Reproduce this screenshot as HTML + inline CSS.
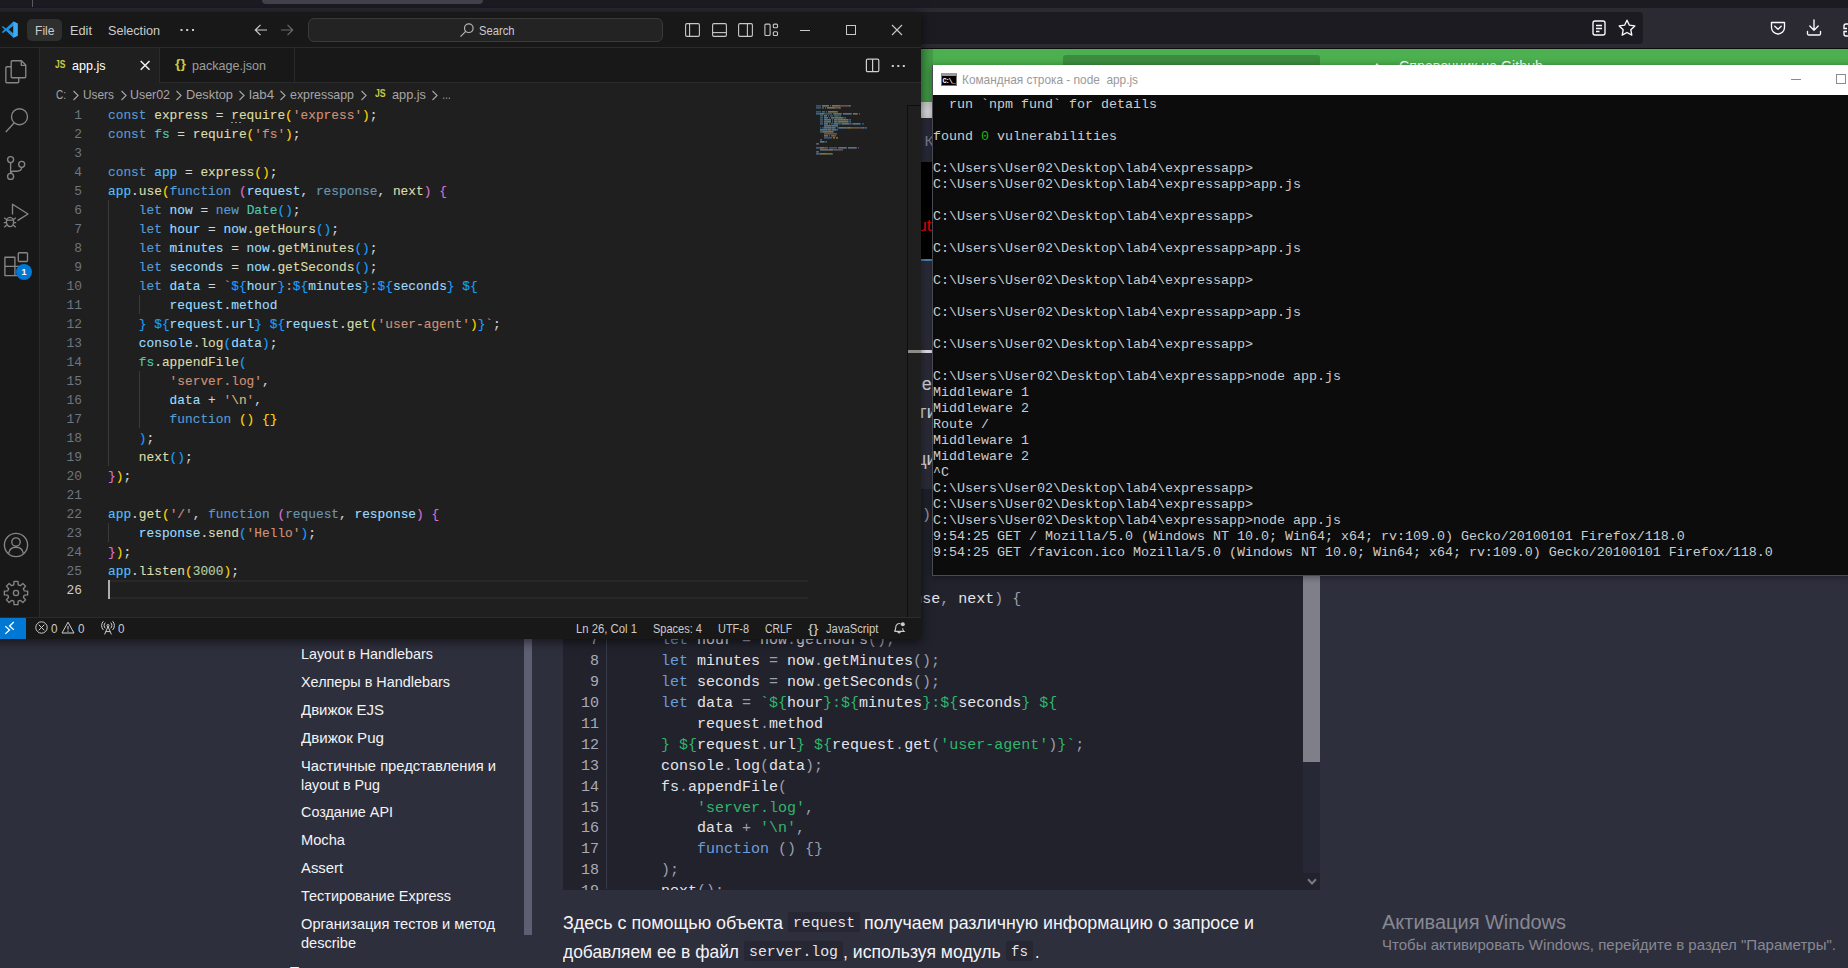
<!DOCTYPE html><html><head><meta charset="utf-8"><title>screen</title><style>
html,body{margin:0;padding:0;overflow:hidden}
body{width:1848px;height:968px;overflow:hidden;position:relative;background:#2e2f3d;font-family:'Liberation Sans', sans-serif}
div,span,svg{position:absolute;box-sizing:border-box}
.t{white-space:pre;display:block;transform-origin:0 50%}
i{font-style:normal}
/* vscode */
.vl{left:108px;height:19px;font:12.83px/19px 'Liberation Mono', monospace;color:#d4d4d4;white-space:pre;-webkit-text-stroke:.12px}
.ln{left:40px;width:42px;text-align:right;height:19px;font:12.83px/19px 'Liberation Mono', monospace;color:#6e7681}
.k{color:#569cd6}.f{color:#dcdcaa}.s{color:#ce9178}.v{color:#9cdcfe}.vd{color:#9cdcfe;opacity:.62}
.c{color:#4fc1ff}.ty{color:#4ec9b0}.n{color:#b5cea8}.e{color:#d7ba7d}
.b1{color:#ffd700}.b2{color:#da70d6}.b3{color:#179fff}.p{color:#d4d4d4}
/* terminal */
.tl{left:0;height:16px;font:13.33px/16px 'Liberation Mono', monospace;color:#cccccc;white-space:pre}
.g{color:#16b916}
/* browser code */
.bl{left:62px;height:20.9px;font:15.0px/20.9px 'Liberation Mono', monospace;white-space:pre;color:#e4e4ea}
.bn{left:0;width:36px;text-align:right;height:20.9px;font:15.0px/20.9px 'Liberation Mono', monospace;color:#a9aab8}
.bl .k{color:#6c9ddb}.bl .w{color:#e4e4ea}.bl .p{color:#9d9eab}.bl .s{color:#2fb56c}
</style></head><body><div style="left:0;top:0;width:1848px;height:8px;background:#1c1b22"></div><div style="left:262px;top:0;width:221px;height:4px;background:#42414d;border-radius:0 0 4px 4px"></div><div style="left:32px;top:0;width:1px;height:7px;background:#5b5b66"></div><div style="left:0;top:8px;width:1848px;height:40px;background:#2b2a33"></div><div style="left:600px;top:12px;width:1043px;height:32px;background:#1c1b22;border-radius:4px"></div><div style="left:0;top:48px;width:1848px;height:1px;background:#0c0c0d"></div><div style="left:0;top:49px;width:1848px;height:53px;background:#4caf50"></div><div style="left:1063px;top:55px;width:257px;height:40px;background:#3c8c40;border-radius:3px"></div><span id="gh" class="t" style="left:1399px;top:54.8px;font:400 15px/21px 'Liberation Sans', sans-serif;color:#ffffff;transform:scaleX(0.9495);">Справочник на Github</span><svg style="left:1371px;top:63px" width="12" height="12" viewBox="0 0 12 12"><path d="M6 0 L11 6 H8 V12 H4 V6 H1 Z" fill="#fff"/></svg><svg style="left:1591px;top:19px" width="16" height="18" viewBox="0 0 16 18" fill="none" stroke="#fbfbfe" stroke-width="1.35"><rect x="2" y="2" width="12" height="14" rx="2"/><path d="M5 6.5h6M5 9.5h6M5 12.5h3.5" stroke-width="1.4"/></svg><svg style="left:1617px;top:18px" width="20" height="20" viewBox="0 0 20 20" fill="none" stroke="#fbfbfe" stroke-width="1.35" stroke-linejoin="round"><path d="M10 2.2l2.4 5 5.4.7-4 3.8 1 5.4L10 14.5l-4.8 2.6 1-5.4-4-3.8 5.4-.7z"/></svg><svg style="left:1769px;top:19px" width="18" height="18" viewBox="0 0 18 18" fill="none" stroke="#fbfbfe" stroke-width="1.35" stroke-linecap="round" stroke-linejoin="round"><path d="M2.5 3.5h13v5a6.5 6.5 0 0 1-13 0z"/><path d="M5.8 7.2L9 10.2l3.2-3"/></svg><svg style="left:1805px;top:18px" width="18" height="20" viewBox="0 0 18 20" fill="none" stroke="#fbfbfe" stroke-width="1.35" stroke-linecap="round" stroke-linejoin="round"><path d="M9 2v10M4.8 8L9 12.2 13.2 8"/><path d="M2.5 13.5v2.2a1.3 1.3 0 0 0 1.3 1.3h10.4a1.3 1.3 0 0 0 1.3-1.3v-2.2"/></svg><svg style="left:1842px;top:22px" width="8" height="16" viewBox="0 0 8 16" fill="none" stroke="#fbfbfe" stroke-width="1.35"><path d="M8 2H4a2 2 0 0 0-2 2v2.5h3M8 14H4a2 2 0 0 1-2-2V9.5h3"/></svg><div style="left:921px;top:102px;width:12px;height:16px;background:linear-gradient(#d0d0d0,#e6e6e6 60%,#dadada)"></div><div style="left:921px;top:49px;width:12px;height:53px;background:#439d47"></div><div style="left:921px;top:118px;width:12px;height:44px;background:#2b2c3a"></div><span class="t" style="left:924.5px;top:129.9px;font:15.5px/22px 'Liberation Sans', sans-serif;color:#8384a0">К</span><div style="left:921px;top:162px;width:12px;height:97px;background:#000"></div><span class="t" style="left:917.2px;top:214px;font:17px/24px 'Liberation Sans', sans-serif;color:#ff0000">ut</span><div style="left:921px;top:259px;width:12px;height:2px;background:#4a8bc8"></div><div style="left:921px;top:350px;width:12px;height:3px;background:#f2f2f2"></div><span class="t" style="left:921.7px;top:371.4px;font:18px/26px 'Liberation Sans', sans-serif;color:#e4e4ea">е</span><span class="t" style="left:920.1px;top:399.4px;font:18px/26px 'Liberation Sans', sans-serif;color:#e4e4ea">ги</span><span class="t" style="left:916.3px;top:445.9px;font:18px/26px 'Liberation Sans', sans-serif;color:#e4e4ea">ци</span><span id="m1" class="t" style="left:301px;top:644.0px;font:400 14.6px/20px 'Liberation Sans', sans-serif;color:#f3f3f6;transform:scaleX(0.9827);">Layout в Handlebars</span><span id="m2" class="t" style="left:301px;top:672.0px;font:400 14.6px/20px 'Liberation Sans', sans-serif;color:#f3f3f6;transform:scaleX(0.9867);">Хелперы в Handlebars</span><span id="m3" class="t" style="left:301px;top:700.0px;font:400 14.6px/20px 'Liberation Sans', sans-serif;color:#f3f3f6;transform:scaleX(1.0263);">Движок EJS</span><span id="m4" class="t" style="left:301px;top:728.0px;font:400 14.6px/20px 'Liberation Sans', sans-serif;color:#f3f3f6;transform:scaleX(1.0365);">Движок Pug</span><span id="m5" class="t" style="left:301px;top:756.0px;font:400 14.6px/20px 'Liberation Sans', sans-serif;color:#f3f3f6;transform:scaleX(1.0107);">Частичные представления и</span><span id="m6" class="t" style="left:301px;top:775.0px;font:400 14.6px/20px 'Liberation Sans', sans-serif;color:#f3f3f6;transform:scaleX(0.9779);">layout в Pug</span><span id="m7" class="t" style="left:301px;top:802.0px;font:400 14.6px/20px 'Liberation Sans', sans-serif;color:#f3f3f6;transform:scaleX(0.9849);">Создание API</span><span id="m8" class="t" style="left:301px;top:830.0px;font:400 14.6px/20px 'Liberation Sans', sans-serif;color:#f3f3f6;transform:scaleX(1.0043);">Mocha</span><span id="m9" class="t" style="left:301px;top:858.0px;font:400 14.6px/20px 'Liberation Sans', sans-serif;color:#f3f3f6;transform:scaleX(1.0155);">Assert</span><span id="m10" class="t" style="left:301px;top:886.0px;font:400 14.6px/20px 'Liberation Sans', sans-serif;color:#f3f3f6;transform:scaleX(0.9908);">Тестирование Express</span><span id="m11" class="t" style="left:301px;top:914.0px;font:400 14.6px/20px 'Liberation Sans', sans-serif;color:#f3f3f6;transform:scaleX(1.0044);">Организация тестов и метод</span><span id="m12" class="t" style="left:301px;top:933.0px;font:400 14.6px/20px 'Liberation Sans', sans-serif;color:#f3f3f6;transform:scaleX(0.9969);">describe</span><span id="m13" class="t" style="left:289px;top:961.5px;font:400 14.6px/20px 'Liberation Sans', sans-serif;color:#f3f3f6;transform:scaleX(1.0509);">Пользовательские</span><div style="left:524px;top:600px;width:8px;height:335px;background:#5e5f73"></div><div style="left:563px;top:489px;width:757px;height:401px;background:#21222c;overflow:hidden"><div style="left:43px;top:0;width:1px;height:400px;background:#3a3b49"></div><div class="bn" style="top:16.9px">1</div><div class="bl" style="top:16.9px"><i class="k">const</i><i class="w"> express </i><i class="p">= </i><i class="w">require</i><i class="p">(</i><i class="s">&#x27;express&#x27;</i><i class="p">);</i></div><div class="bn" style="top:37.8px">2</div><div class="bl" style="top:37.8px"><i class="k">const</i><i class="w"> fs </i><i class="p">= </i><i class="w">require</i><i class="p">(</i><i class="s">&#x27;fs&#x27;</i><i class="p">);</i></div><div class="bn" style="top:58.7px">3</div><div class="bl" style="top:58.7px"></div><div class="bn" style="top:79.6px">4</div><div class="bl" style="top:79.6px"><i class="k">const</i><i class="w"> app </i><i class="p">= </i><i class="w">express</i><i class="p">();</i></div><div class="bn" style="top:100.5px">5</div><div class="bl" style="top:100.5px"><i class="w">app</i><i class="p">.</i><i class="w">use</i><i class="p">(</i><i class="k">function</i><i class="p"> (</i><i class="w">request</i><i class="p">, </i><i class="w">response</i><i class="p">, </i><i class="w">next</i><i class="p">) {</i></div><div class="bn" style="top:121.4px">6</div><div class="bl" style="top:121.4px"><i class="w">    </i><i class="k">let</i><i class="w"> now </i><i class="p">= </i><i class="k">new</i><i class="w"> Date</i><i class="p">();</i></div><div class="bn" style="top:142.3px">7</div><div class="bl" style="top:142.3px"><i class="w">    </i><i class="k">let</i><i class="w"> hour </i><i class="p">= </i><i class="w">now</i><i class="p">.</i><i class="w">getHours</i><i class="p">();</i></div><div class="bn" style="top:163.2px">8</div><div class="bl" style="top:163.2px"><i class="w">    </i><i class="k">let</i><i class="w"> minutes </i><i class="p">= </i><i class="w">now</i><i class="p">.</i><i class="w">getMinutes</i><i class="p">();</i></div><div class="bn" style="top:184.1px">9</div><div class="bl" style="top:184.1px"><i class="w">    </i><i class="k">let</i><i class="w"> seconds </i><i class="p">= </i><i class="w">now</i><i class="p">.</i><i class="w">getSeconds</i><i class="p">();</i></div><div class="bn" style="top:205.0px">10</div><div class="bl" style="top:205.0px"><i class="w">    </i><i class="k">let</i><i class="w"> data </i><i class="p">= </i><i class="s">`${</i><i class="w">hour</i><i class="s">}:${</i><i class="w">minutes</i><i class="s">}:${</i><i class="w">seconds</i><i class="s">} ${</i></div><div class="bn" style="top:225.9px">11</div><div class="bl" style="top:225.9px"><i class="w">        request</i><i class="p">.</i><i class="w">method</i></div><div class="bn" style="top:246.8px">12</div><div class="bl" style="top:246.8px"><i class="w">    </i><i class="s">} ${</i><i class="w">request</i><i class="p">.</i><i class="w">url</i><i class="s">} ${</i><i class="w">request</i><i class="p">.</i><i class="w">get</i><i class="p">(</i><i class="s">&#x27;user-agent&#x27;</i><i class="p">)</i><i class="s">}`</i><i class="p">;</i></div><div class="bn" style="top:267.7px">13</div><div class="bl" style="top:267.7px"><i class="w">    console</i><i class="p">.</i><i class="w">log</i><i class="p">(</i><i class="w">data</i><i class="p">);</i></div><div class="bn" style="top:288.6px">14</div><div class="bl" style="top:288.6px"><i class="w">    fs</i><i class="p">.</i><i class="w">appendFile</i><i class="p">(</i></div><div class="bn" style="top:309.5px">15</div><div class="bl" style="top:309.5px"><i class="w">        </i><i class="s">&#x27;server.log&#x27;</i><i class="p">,</i></div><div class="bn" style="top:330.4px">16</div><div class="bl" style="top:330.4px"><i class="w">        data </i><i class="p">+ </i><i class="s">&#x27;\n&#x27;</i><i class="p">,</i></div><div class="bn" style="top:351.3px">17</div><div class="bl" style="top:351.3px"><i class="w">        </i><i class="k">function</i><i class="p"> () {}</i></div><div class="bn" style="top:372.2px">18</div><div class="bl" style="top:372.2px"><i class="w">    </i><i class="p">);</i></div><div class="bn" style="top:393.1px">19</div><div class="bl" style="top:393.1px"><i class="w">    next</i><i class="p">();</i></div><div style="left:740px;top:0;width:17px;height:384px;background:#272836"></div><div style="left:740px;top:0;width:17px;height:273px;background:#7f7f8a"></div><svg style="left:743.5px;top:389px" width="10" height="8" viewBox="0 0 10 8" fill="none" stroke="#7b7b85" stroke-width="2"><path d="M1 1.300l4 4.200 4-4.200"/></svg></div><span id="p1" class="t" style="left:563px;top:910.0px;font:400 18.3px/26px 'Liberation Sans', sans-serif;color:#f4f4f7;transform:scaleX(0.9814);">Здесь с помощью объекта</span><div style="left:788px;top:912px;width:72px;height:20px;background:#262732;border-radius:3px"></div><span id="p2" class="t" style="left:793px;top:913.1px;font:400 15px/21px 'Liberation Mono', monospace;color:#e4e4ea;transform:scaleX(0.9839);">request</span><span id="p3" class="t" style="left:864px;top:910.0px;font:400 18.3px/26px 'Liberation Sans', sans-serif;color:#f4f4f7;transform:scaleX(0.9744);">получаем различную информацию о запросе и</span><span id="p4" class="t" style="left:563px;top:939.0px;font:400 18.3px/26px 'Liberation Sans', sans-serif;color:#f4f4f7;transform:scaleX(0.9512);">добавляем ее в файл</span><div style="left:744px;top:941px;width:99px;height:20px;background:#262732;border-radius:3px"></div><span id="p5" class="t" style="left:749px;top:942.1px;font:400 15px/21px 'Liberation Mono', monospace;color:#e4e4ea;transform:scaleX(0.9887);">server.log</span><span id="p6" class="t" style="left:843.4px;top:939.0px;font:400 18.3px/26px 'Liberation Sans', sans-serif;color:#f4f4f7;transform:scaleX(0.9646);">, используя модуль</span><div style="left:1006px;top:941px;width:27px;height:20px;background:#262732;border-radius:3px"></div><span id="p7" class="t" style="left:1011px;top:942.1px;font:400 15px/21px 'Liberation Mono', monospace;color:#e4e4ea;transform:scaleX(0.9436);">fs</span><span id="p8" class="t" style="left:1034.5px;top:939.0px;font:400 18.3px/26px 'Liberation Sans', sans-serif;color:#f4f4f7;transform:scaleX(0.8834);">.</span><span id="w1" class="t" style="left:1382px;top:908.0px;font:400 20px/28px 'Liberation Sans', sans-serif;color:#878892;transform:scaleX(0.9982);">Активация Windows</span><span id="w2" class="t" style="left:1382px;top:935.0px;font:400 14.5px/20px 'Liberation Sans', sans-serif;color:#878892;transform:scaleX(1.0364);">Чтобы активировать Windows, перейдите в раздел &quot;Параметры&quot;.</span><div style="left:932px;top:65px;width:920px;height:511px;background:#4a4a52;box-shadow:0 1px 7px rgba(0,0,0,.4)"></div><div style="left:933px;top:65px;width:920px;height:30px;background:#ffffff"></div><div style="left:933px;top:95px;width:920px;height:480px;background:#0c0c0c;overflow:hidden"><div class="tl" style="top:1.5px">  run `npm fund` for details</div><div class="tl" style="top:33.5px">found <i class="g">0</i> vulnerabilities</div><div class="tl" style="top:65.5px">C:\Users\User02\Desktop\lab4\expressapp&gt;</div><div class="tl" style="top:81.5px">C:\Users\User02\Desktop\lab4\expressapp&gt;app.js</div><div class="tl" style="top:113.5px">C:\Users\User02\Desktop\lab4\expressapp&gt;</div><div class="tl" style="top:145.5px">C:\Users\User02\Desktop\lab4\expressapp&gt;app.js</div><div class="tl" style="top:177.5px">C:\Users\User02\Desktop\lab4\expressapp&gt;</div><div class="tl" style="top:209.5px">C:\Users\User02\Desktop\lab4\expressapp&gt;app.js</div><div class="tl" style="top:241.5px">C:\Users\User02\Desktop\lab4\expressapp&gt;</div><div class="tl" style="top:273.5px">C:\Users\User02\Desktop\lab4\expressapp&gt;node app.js</div><div class="tl" style="top:289.5px">Middleware 1</div><div class="tl" style="top:305.5px">Middleware 2</div><div class="tl" style="top:321.5px">Route /</div><div class="tl" style="top:337.5px">Middleware 1</div><div class="tl" style="top:353.5px">Middleware 2</div><div class="tl" style="top:369.5px">^C</div><div class="tl" style="top:385.5px">C:\Users\User02\Desktop\lab4\expressapp&gt;</div><div class="tl" style="top:401.5px">C:\Users\User02\Desktop\lab4\expressapp&gt;</div><div class="tl" style="top:417.5px">C:\Users\User02\Desktop\lab4\expressapp&gt;node app.js</div><div class="tl" style="top:433.5px">9:54:25 GET / Mozilla/5.0 (Windows NT 10.0; Win64; x64; rv:109.0) Gecko/20100101 Firefox/118.0</div><div class="tl" style="top:449.5px">9:54:25 GET /favicon.ico Mozilla/5.0 (Windows NT 10.0; Win64; x64; rv:109.0) Gecko/20100101 Firefox/118.0</div></div><div style="left:941px;top:73px;width:16px;height:13px;background:#000;border:1px solid #7a7a7a;border-top:3px solid #9a9a9a"></div><span class="t" style="left:942.600px;top:76.500px;font:700 7px/9px 'Liberation Mono', monospace;color:#fff;letter-spacing:-1.200px">C:\_</span><span id="tt" class="t" style="left:962px;top:72.0px;font:400 12.2px/17px 'Liberation Sans', sans-serif;color:#999999;transform:scaleX(0.9712);">Командная строка - node  app.js</span><div style="left:1791px;top:79px;width:10px;height:1px;background:#8a8a8a"></div><div style="left:1836px;top:74px;width:10px;height:10px;border:1px solid #8a8a8a"></div><div style="left:-10px;top:12px;width:931px;height:627px;background:#181818;box-shadow:0 2px 10px 1px rgba(0,0,0,.55)"></div><div style="left:0;top:12px;width:921px;height:35px;background:#181818"></div><div style="left:0;top:47px;width:921px;height:1px;background:#2b2b2b"></div><svg style="left:.8px;top:21.300px" width="17.500" height="17.200" viewBox="0 0 100 100"><path d="M71 3 L28 43 L11 30 L3 34 L20 50 L3 66 L11 70 L28 57 L71 97 L96 86 V14 Z M72 28 V72 L43 50 Z" fill="#2391de" fill-rule="evenodd"/><path d="M71 3 L96 14 V86 L71 97 Z" fill="#3dacf7"/></svg><div style="left:27px;top:19px;width:35px;height:22px;background:#2e2f2f;border-radius:5px"></div><span id="mf" class="t" style="left:35px;top:22.0px;font:400 13px/18px 'Liberation Sans', sans-serif;color:#cccccc;transform:scaleX(0.9306);">File</span><span id="me" class="t" style="left:70px;top:22.0px;font:400 13px/18px 'Liberation Sans', sans-serif;color:#cccccc;transform:scaleX(0.9819);">Edit</span><span id="ms" class="t" style="left:108px;top:22.0px;font:400 13px/18px 'Liberation Sans', sans-serif;color:#cccccc;transform:scaleX(0.9722);">Selection</span><svg style="left:180px;top:28px" width="15" height="4" viewBox="0 0 15 4" fill="#cccccc"><rect x="0.5" y="1" width="2" height="2"/><rect x="6.2" y="1" width="2" height="2"/><rect x="12" y="1" width="2" height="2"/></svg><svg style="left:254px;top:23px" width="14" height="14" viewBox="0 0 14 14" fill="none" stroke="#cccccc" stroke-width="1.2"><path d="M13 7H1.5M6.5 1.8L1.3 7l5.2 5.2"/></svg><svg style="left:280px;top:23px" width="14" height="14" viewBox="0 0 14 14" fill="none" stroke="#6a6a6a" stroke-width="1.2"><path d="M1 7h11.5M7.5 1.8L12.7 7l-5.2 5.2"/></svg><div style="left:308px;top:18px;width:355px;height:24px;background:#232323;border:1px solid #3a3a3a;border-radius:6px"></div><svg style="left:459px;top:22px" width="16" height="16" viewBox="0 0 16 16" fill="none" stroke="#b4b4b4" stroke-width="1.2"><circle cx="9.8" cy="6.2" r="4.3"/><path d="M6.7 9.3L1.5 14.6"/></svg><span id="sr" class="t" style="left:479px;top:22.5px;font:400 12.4px/17px 'Liberation Sans', sans-serif;color:#cccccc;transform:scaleX(0.9041);">Search</span><svg style="left:684.5px;top:23px" width="15" height="14" viewBox="0 0 15 14" fill="none" stroke="#c8c8c8" stroke-width="1.1"><rect x=".6" y=".6" width="13.8" height="12.8" rx="1.3"/><path d="M4.6 .6v12.8"/></svg><svg style="left:711.5px;top:23px" width="15" height="14" viewBox="0 0 15 14" fill="none" stroke="#c8c8c8" stroke-width="1.1"><rect x=".6" y=".6" width="13.8" height="12.8" rx="1.3"/><path d="M.6 9.6h13.8"/></svg><svg style="left:737.5px;top:23px" width="15" height="14" viewBox="0 0 15 14" fill="none" stroke="#c8c8c8" stroke-width="1.1"><rect x=".6" y=".6" width="13.8" height="12.8" rx="1.3"/><path d="M9.4 .6v12.8"/></svg><svg style="left:763.5px;top:23px" width="15" height="14" viewBox="0 0 15 14" fill="none" stroke="#c8c8c8" stroke-width="1.1"><rect x=".9" y="1.1" width="5.2" height="11.4" rx="1"/><rect x="9.3" y="1.1" width="4.2" height="3.6" rx="1"/><rect x="9.3" y="8.7" width="4.2" height="3.8" rx="1"/></svg><div style="left:800px;top:30px;width:10px;height:1px;background:#c8c8c8"></div><div style="left:846px;top:25px;width:10px;height:10px;border:1px solid #c8c8c8"></div><svg style="left:891px;top:24px" width="12" height="12" viewBox="0 0 12 12" stroke="#c8c8c8" stroke-width="1.1"><path d="M1 1l10 10M11 1L1 11"/></svg><div style="left:0;top:48px;width:40px;height:569px;background:#181818;border-right:1px solid #2b2b2b"></div><svg style="left:4px;top:59px" width="25" height="26" viewBox="0 0 25 26" fill="none" stroke="#868686" stroke-width="1.35" stroke-linejoin="round"><path d="M8.200 1.750H17.500L21.750 6V17.700a1 1 0 0 1-1 1H8.200a1 1 0 0 1-1-1V2.750a1 1 0 0 1 1-1Z"/><path d="M17.300 1.900V6.300H21.600"/><path d="M7.200 7.750H2.850a1 1 0 0 0-1 1V22.750a1 1 0 0 0 1 1H13.750a1 1 0 0 0 1-1V18.700"/></svg><svg style="left:4px;top:107px" width="26" height="26" viewBox="0 0 26 26" fill="none" stroke="#868686" stroke-width="1.35" stroke-linejoin="round"><circle cx="15.5" cy="9.7" r="8"/><path d="M10.3 15.8L1.8 25"/></svg><svg style="left:4px;top:155px" width="25" height="27" viewBox="0 0 25 27" fill="none" stroke="#868686" stroke-width="1.35" stroke-linejoin="round"><circle cx="6.6" cy="4.6" r="3"/><circle cx="6.6" cy="21.4" r="3"/><circle cx="17.700" cy="9.300" r="3"/><path d="M6.600 7.600v10.800M17.700 12.300c0 3-1.800 3.900-5 3.900H9c-1.400 0-2.400.9-2.400 2.200"/></svg><svg style="left:2px;top:202px" width="28" height="27" viewBox="0 0 28 27" fill="none" stroke="#868686" stroke-width="1.35" stroke-linejoin="round"><path d="M10.5 12.5V2.2L26 12 15.5 18.6"/><ellipse cx="8" cy="20" rx="3.6" ry="4.6"/><path d="M4.600 18.200h6.800M2.200 15.800l2.600 2M13.800 15.800l-2.600 2M1.800 20.600h2.600M11.600 20.600h2.600M2.200 25.200l2.600-2.200M13.800 25.200l-2.600-2.200" stroke-width="1.2"/></svg><svg style="left:4px;top:251px" width="26" height="27" viewBox="0 0 26 27" fill="none" stroke="#868686" stroke-width="1.35" stroke-linejoin="round"><path d="M.900 6.200h10v9.200H.900zM.900 15.400h10v9.200H.900zM10.900 15.400h10v9.200H10.900z"/><rect x="14.300" y="1.700" width="9.200" height="8.800" rx=".9"/></svg><div style="left:16px;top:264px;width:16px;height:16px;border-radius:8px;background:#0078d4"></div><span class="t" style="left:21.5px;top:266px;font:700 9px/12px 'Liberation Sans', sans-serif;color:#fff">1</span><svg style="left:3px;top:532px" width="26" height="26" viewBox="0 0 26 26" fill="none" stroke="#868686" stroke-width="1.35" stroke-linejoin="round" stroke-width="1.4"><circle cx="13" cy="13" r="11.6"/><circle cx="13" cy="10" r="4.2"/><path d="M5.6 21.6c.6-4 3.6-6.4 7.4-6.4s6.8 2.400 7.400 6.400"/></svg><svg style="left:3px;top:580px" width="26" height="26" viewBox="0 0 26 26" fill="none" stroke="#868686" stroke-width="1.35" stroke-linejoin="round"><path d="M10.82 4.78 L11.06 1.36 L14.94 1.36 L15.18 4.78 L17.27 5.65 L19.86 3.40 L22.60 6.14 L20.35 8.73 L21.22 10.82 L24.64 11.06 L24.64 14.94 L21.22 15.18 L20.35 17.27 L22.60 19.86 L19.86 22.60 L17.27 20.35 L15.18 21.22 L14.94 24.64 L11.06 24.64 L10.82 21.22 L8.73 20.35 L6.14 22.60 L3.40 19.86 L5.65 17.27 L4.78 15.18 L1.36 14.94 L1.36 11.06 L4.78 10.82 L5.65 8.73 L3.40 6.14 L6.14 3.40 L8.73 5.65 Z"/><circle cx="13" cy="13" r="2.6"/></svg><div style="left:40px;top:48px;width:881px;height:35px;background:#181818;border-bottom:1px solid #2b2b2b"></div><div style="left:40px;top:48px;width:120px;height:35px;background:#1f1f1f;border-right:1px solid #2b2b2b"></div><div style="left:294px;top:48px;width:1px;height:34px;background:#2b2b2b"></div><span id="tj" class="t" style="left:54.8px;top:57.6px;font:700 10.2px/14px 'Liberation Sans', sans-serif;color:#cbcb41;transform:scaleX(0.8341);">JS</span><span id="ta" class="t" style="left:72px;top:56.5px;font:400 13px/18px 'Liberation Sans', sans-serif;color:#ffffff;transform:scaleX(0.9653);">app.js</span><svg style="left:139px;top:59px" width="12" height="12" viewBox="0 0 12 12" stroke="#f0f0f0" stroke-width="1.5"><path d="M1.700 2l8.800 8.800M10.500 2L1.700 10.800"/></svg><span id="tb" class="t" style="left:174.5px;top:54.1px;font:700 13.5px/19px 'Liberation Sans', sans-serif;color:#cbcb41;transform:scaleX(1.0461);">{}</span><span id="tp" class="t" style="left:192px;top:56.5px;font:400 13px/18px 'Liberation Sans', sans-serif;color:#9d9d9d;transform:scaleX(0.9657);">package.json</span><svg style="left:865px;top:58px" width="15" height="15" viewBox="0 0 15 15" fill="none" stroke="#d0d0d0" stroke-width="1.2"><rect x="1.4" y="1.200" width="12.400" height="12.400" rx="1.2"/><path d="M7.600 1.200v12.400"/></svg><svg style="left:891px;top:64px" width="15" height="4" viewBox="0 0 15 4" fill="#d0d0d0"><rect x=".8" y="1" width="2" height="2"/><rect x="6.300" y="1" width="2" height="2"/><rect x="11.800" y="1" width="2" height="2"/></svg><div style="left:40px;top:83px;width:881px;height:534px;background:#1f1f1f"></div><span id="c1" class="t" style="left:56px;top:86.0px;font:400 13px/18px 'Liberation Sans', sans-serif;color:#a6a6a6;transform:scaleX(0.7692);">C:</span><span id="c2" class="t" style="left:83px;top:86.0px;font:400 13px/18px 'Liberation Sans', sans-serif;color:#a6a6a6;transform:scaleX(0.9130);">Users</span><span id="c3" class="t" style="left:130px;top:86.0px;font:400 13px/18px 'Liberation Sans', sans-serif;color:#a6a6a6;transform:scaleX(0.9542);">User02</span><span id="c4" class="t" style="left:186px;top:86.0px;font:400 13px/18px 'Liberation Sans', sans-serif;color:#a6a6a6;transform:scaleX(0.9853);">Desktop</span><span id="c5" class="t" style="left:249px;top:86.0px;font:400 13px/18px 'Liberation Sans', sans-serif;color:#a6a6a6;transform:scaleX(1.0172);">lab4</span><span id="c6" class="t" style="left:290px;top:86.0px;font:400 13px/18px 'Liberation Sans', sans-serif;color:#a6a6a6;transform:scaleX(0.9521);">expressapp</span><span id="c8" class="t" style="left:392px;top:86.0px;font:400 13px/18px 'Liberation Sans', sans-serif;color:#a6a6a6;transform:scaleX(0.9797);">app.js</span><svg style="left:72px;top:89.5px" width="8" height="11" viewBox="0 0 8 11" fill="none" stroke="#a6a6a6" stroke-width="1.1"><path d="M1.5 1l4.600 4.500L1.500 10"/></svg><svg style="left:120px;top:89.5px" width="8" height="11" viewBox="0 0 8 11" fill="none" stroke="#a6a6a6" stroke-width="1.1"><path d="M1.5 1l4.600 4.500L1.500 10"/></svg><svg style="left:175px;top:89.5px" width="8" height="11" viewBox="0 0 8 11" fill="none" stroke="#a6a6a6" stroke-width="1.1"><path d="M1.5 1l4.600 4.500L1.500 10"/></svg><svg style="left:238px;top:89.5px" width="8" height="11" viewBox="0 0 8 11" fill="none" stroke="#a6a6a6" stroke-width="1.1"><path d="M1.5 1l4.600 4.500L1.500 10"/></svg><svg style="left:279px;top:89.5px" width="8" height="11" viewBox="0 0 8 11" fill="none" stroke="#a6a6a6" stroke-width="1.1"><path d="M1.5 1l4.600 4.500L1.500 10"/></svg><svg style="left:360px;top:89.5px" width="8" height="11" viewBox="0 0 8 11" fill="none" stroke="#a6a6a6" stroke-width="1.1"><path d="M1.5 1l4.600 4.500L1.500 10"/></svg><svg style="left:431px;top:89.5px" width="8" height="11" viewBox="0 0 8 11" fill="none" stroke="#a6a6a6" stroke-width="1.1"><path d="M1.5 1l4.600 4.500L1.500 10"/></svg><span id="c7" class="t" style="left:375.3px;top:86.8px;font:700 10.2px/14px 'Liberation Sans', sans-serif;color:#cbcb41;transform:scaleX(0.8581);">JS</span><span id="c9" class="t" style="left:442px;top:86.0px;font:400 13px/18px 'Liberation Sans', sans-serif;color:#a6a6a6;transform:scaleX(0.6923);">…</span><div class="ln" style="top:106px;color:#6e7681">1</div><div class="vl" style="top:106px"><i class="k">const</i> <i class="f">express</i><i class="p"> = </i><i class="f">require</i><i class="b1">(</i><i class="s">&#x27;express&#x27;</i><i class="b1">)</i><i class="p">;</i></div><div class="ln" style="top:125px;color:#6e7681">2</div><div class="vl" style="top:125px"><i class="k">const</i> <i class="ty">fs</i><i class="p"> = </i><i class="f">require</i><i class="b1">(</i><i class="s">&#x27;fs&#x27;</i><i class="b1">)</i><i class="p">;</i></div><div class="ln" style="top:144px;color:#6e7681">3</div><div class="ln" style="top:163px;color:#6e7681">4</div><div class="vl" style="top:163px"><i class="k">const</i> <i class="c">app</i><i class="p"> = </i><i class="f">express</i><i class="b1">()</i><i class="p">;</i></div><div class="ln" style="top:182px;color:#6e7681">5</div><div class="vl" style="top:182px"><i class="c">app</i><i class="p">.</i><i class="f">use</i><i class="b1">(</i><i class="k">function</i><i class="p"> </i><i class="b2">(</i><i class="v">request</i><i class="p">, </i><i class="vd">response</i><i class="p">, </i><i class="f">next</i><i class="b2">)</i><i class="p"> </i><i class="b2">{</i></div><div class="ln" style="top:201px;color:#6e7681">6</div><div class="vl" style="top:201px">    <i class="k">let</i><i class="p"> </i><i class="v">now</i><i class="p"> = </i><i class="k">new</i><i class="p"> </i><i class="ty">Date</i><i class="b3">()</i><i class="p">;</i></div><div class="ln" style="top:220px;color:#6e7681">7</div><div class="vl" style="top:220px">    <i class="k">let</i><i class="p"> </i><i class="v">hour</i><i class="p"> = </i><i class="v">now</i><i class="p">.</i><i class="f">getHours</i><i class="b3">()</i><i class="p">;</i></div><div class="ln" style="top:239px;color:#6e7681">8</div><div class="vl" style="top:239px">    <i class="k">let</i><i class="p"> </i><i class="v">minutes</i><i class="p"> = </i><i class="v">now</i><i class="p">.</i><i class="f">getMinutes</i><i class="b3">()</i><i class="p">;</i></div><div class="ln" style="top:258px;color:#6e7681">9</div><div class="vl" style="top:258px">    <i class="k">let</i><i class="p"> </i><i class="v">seconds</i><i class="p"> = </i><i class="v">now</i><i class="p">.</i><i class="f">getSeconds</i><i class="b3">()</i><i class="p">;</i></div><div class="ln" style="top:277px;color:#6e7681">10</div><div class="vl" style="top:277px">    <i class="k">let</i><i class="p"> </i><i class="v">data</i><i class="p"> = </i><i class="s">`</i><i class="b3">${</i><i class="v">hour</i><i class="b3">}</i><i class="s">:</i><i class="b3">${</i><i class="v">minutes</i><i class="b3">}</i><i class="s">:</i><i class="b3">${</i><i class="v">seconds</i><i class="b3">}</i><i class="s"> </i><i class="b3">${</i></div><div class="ln" style="top:296px;color:#6e7681">11</div><div class="vl" style="top:296px">        <i class="v">request</i><i class="p">.</i><i class="v">method</i></div><div class="ln" style="top:315px;color:#6e7681">12</div><div class="vl" style="top:315px">    <i class="b3">}</i><i class="s"> </i><i class="b3">${</i><i class="v">request</i><i class="p">.</i><i class="v">url</i><i class="b3">}</i><i class="s"> </i><i class="b3">${</i><i class="v">request</i><i class="p">.</i><i class="f">get</i><i class="b1">(</i><i class="s">&#x27;user-agent&#x27;</i><i class="b1">)</i><i class="b3">}</i><i class="s">`</i><i class="p">;</i></div><div class="ln" style="top:334px;color:#6e7681">13</div><div class="vl" style="top:334px">    <i class="v">console</i><i class="p">.</i><i class="f">log</i><i class="b3">(</i><i class="v">data</i><i class="b3">)</i><i class="p">;</i></div><div class="ln" style="top:353px;color:#6e7681">14</div><div class="vl" style="top:353px">    <i class="ty">fs</i><i class="p">.</i><i class="f">appendFile</i><i class="b3">(</i></div><div class="ln" style="top:372px;color:#6e7681">15</div><div class="vl" style="top:372px">        <i class="s">&#x27;server.log&#x27;</i><i class="p">,</i></div><div class="ln" style="top:391px;color:#6e7681">16</div><div class="vl" style="top:391px">        <i class="v">data</i><i class="p"> + </i><i class="s">&#x27;</i><i class="e">\n</i><i class="s">&#x27;</i><i class="p">,</i></div><div class="ln" style="top:410px;color:#6e7681">17</div><div class="vl" style="top:410px">        <i class="k">function</i><i class="p"> </i><i class="b1">()</i><i class="p"> </i><i class="b1">{}</i></div><div class="ln" style="top:429px;color:#6e7681">18</div><div class="vl" style="top:429px">    <i class="b3">)</i><i class="p">;</i></div><div class="ln" style="top:448px;color:#6e7681">19</div><div class="vl" style="top:448px">    <i class="f">next</i><i class="b3">()</i><i class="p">;</i></div><div class="ln" style="top:467px;color:#6e7681">20</div><div class="vl" style="top:467px"><i class="b2">}</i><i class="b1">)</i><i class="p">;</i></div><div class="ln" style="top:486px;color:#6e7681">21</div><div class="ln" style="top:505px;color:#6e7681">22</div><div class="vl" style="top:505px"><i class="c">app</i><i class="p">.</i><i class="f">get</i><i class="b1">(</i><i class="s">&#x27;/&#x27;</i><i class="p">, </i><i class="k">function</i><i class="p"> </i><i class="b2">(</i><i class="vd">request</i><i class="p">, </i><i class="v">response</i><i class="b2">)</i><i class="p"> </i><i class="b2">{</i></div><div class="ln" style="top:524px;color:#6e7681">23</div><div class="vl" style="top:524px">    <i class="v">response</i><i class="p">.</i><i class="f">send</i><i class="b3">(</i><i class="s">&#x27;Hello&#x27;</i><i class="b3">)</i><i class="p">;</i></div><div class="ln" style="top:543px;color:#6e7681">24</div><div class="vl" style="top:543px"><i class="b2">}</i><i class="b1">)</i><i class="p">;</i></div><div class="ln" style="top:562px;color:#6e7681">25</div><div class="vl" style="top:562px"><i class="c">app</i><i class="p">.</i><i class="f">listen</i><i class="b1">(</i><i class="n">3000</i><i class="b1">)</i><i class="p">;</i></div><div class="ln" style="top:581px;color:#cccccc">26</div><div style="left:108px;top:200px;width:1px;height:266px;background:#3a3a3a"></div><div style="left:108px;top:523px;width:1px;height:19px;background:#3a3a3a"></div><div style="left:139px;top:295px;width:1px;height:19px;background:#3a3a3a"></div><div style="left:139px;top:371px;width:1px;height:57px;background:#3a3a3a"></div><div style="left:108px;top:580px;width:700px;height:19px;border-top:2px solid #282828;border-bottom:2px solid #282828"></div><div style="left:108px;top:580px;width:2px;height:19px;background:#aeafad"></div><div style="left:231px;top:121.5px;width:10px;height:1.5px;background-image:linear-gradient(90deg,#8f8f8f 50%,transparent 50%);background-size:4px 2px"></div><svg style="left:816px;top:105px;opacity:.6" width="120" height="60" viewBox="0 0 120 60"><rect x="0" y="0.25" width="5" height="1.25" fill="#569cd6"/><rect x="6" y="0.25" width="7" height="1.25" fill="#dcdcaa"/><rect x="14" y="0.25" width="1" height="1.25" fill="#d4d4d4" opacity=".7"/><rect x="16" y="0.25" width="7" height="1.25" fill="#dcdcaa"/><rect x="23" y="0.25" width="1" height="1.25" fill="#ffd700"/><rect x="24" y="0.25" width="9" height="1.25" fill="#ce9178"/><rect x="33" y="0.25" width="1" height="1.25" fill="#ffd700"/><rect x="34" y="0.25" width="1" height="1.25" fill="#d4d4d4" opacity=".7"/><rect x="0" y="2.25" width="5" height="1.25" fill="#569cd6"/><rect x="6" y="2.25" width="2" height="1.25" fill="#4ec9b0"/><rect x="9" y="2.25" width="1" height="1.25" fill="#d4d4d4" opacity=".7"/><rect x="11" y="2.25" width="7" height="1.25" fill="#dcdcaa"/><rect x="18" y="2.25" width="1" height="1.25" fill="#ffd700"/><rect x="19" y="2.25" width="4" height="1.25" fill="#ce9178"/><rect x="23" y="2.25" width="1" height="1.25" fill="#ffd700"/><rect x="24" y="2.25" width="1" height="1.25" fill="#d4d4d4" opacity=".7"/><rect x="0" y="6.25" width="5" height="1.25" fill="#569cd6"/><rect x="6" y="6.25" width="3" height="1.25" fill="#4fc1ff"/><rect x="10" y="6.25" width="1" height="1.25" fill="#d4d4d4" opacity=".7"/><rect x="12" y="6.25" width="7" height="1.25" fill="#dcdcaa"/><rect x="19" y="6.25" width="2" height="1.25" fill="#ffd700"/><rect x="21" y="6.25" width="1" height="1.25" fill="#d4d4d4" opacity=".7"/><rect x="0" y="8.25" width="3" height="1.25" fill="#4fc1ff"/><rect x="3" y="8.25" width="1" height="1.25" fill="#d4d4d4" opacity=".7"/><rect x="4" y="8.25" width="3" height="1.25" fill="#dcdcaa"/><rect x="7" y="8.25" width="1" height="1.25" fill="#ffd700"/><rect x="8" y="8.25" width="8" height="1.25" fill="#569cd6"/><rect x="17" y="8.25" width="1" height="1.25" fill="#da70d6"/><rect x="18" y="8.25" width="7" height="1.25" fill="#9cdcfe"/><rect x="25" y="8.25" width="1" height="1.25" fill="#d4d4d4" opacity=".7"/><rect x="27" y="8.25" width="8" height="1.25" fill="#9cdcfe"/><rect x="35" y="8.25" width="1" height="1.25" fill="#d4d4d4" opacity=".7"/><rect x="37" y="8.25" width="4" height="1.25" fill="#dcdcaa"/><rect x="41" y="8.25" width="1" height="1.25" fill="#da70d6"/><rect x="43" y="8.25" width="1" height="1.25" fill="#da70d6"/><rect x="4" y="10.25" width="3" height="1.25" fill="#569cd6"/><rect x="8" y="10.25" width="3" height="1.25" fill="#9cdcfe"/><rect x="12" y="10.25" width="1" height="1.25" fill="#d4d4d4" opacity=".7"/><rect x="14" y="10.25" width="3" height="1.25" fill="#569cd6"/><rect x="18" y="10.25" width="4" height="1.25" fill="#4ec9b0"/><rect x="22" y="10.25" width="2" height="1.25" fill="#179fff"/><rect x="24" y="10.25" width="1" height="1.25" fill="#d4d4d4" opacity=".7"/><rect x="4" y="12.25" width="3" height="1.25" fill="#569cd6"/><rect x="8" y="12.25" width="4" height="1.25" fill="#9cdcfe"/><rect x="13" y="12.25" width="1" height="1.25" fill="#d4d4d4" opacity=".7"/><rect x="15" y="12.25" width="3" height="1.25" fill="#9cdcfe"/><rect x="18" y="12.25" width="1" height="1.25" fill="#d4d4d4" opacity=".7"/><rect x="19" y="12.25" width="8" height="1.25" fill="#dcdcaa"/><rect x="27" y="12.25" width="2" height="1.25" fill="#179fff"/><rect x="29" y="12.25" width="1" height="1.25" fill="#d4d4d4" opacity=".7"/><rect x="4" y="14.25" width="3" height="1.25" fill="#569cd6"/><rect x="8" y="14.25" width="7" height="1.25" fill="#9cdcfe"/><rect x="16" y="14.25" width="1" height="1.25" fill="#d4d4d4" opacity=".7"/><rect x="18" y="14.25" width="3" height="1.25" fill="#9cdcfe"/><rect x="21" y="14.25" width="1" height="1.25" fill="#d4d4d4" opacity=".7"/><rect x="22" y="14.25" width="10" height="1.25" fill="#dcdcaa"/><rect x="32" y="14.25" width="2" height="1.25" fill="#179fff"/><rect x="34" y="14.25" width="1" height="1.25" fill="#d4d4d4" opacity=".7"/><rect x="4" y="16.25" width="3" height="1.25" fill="#569cd6"/><rect x="8" y="16.25" width="7" height="1.25" fill="#9cdcfe"/><rect x="16" y="16.25" width="1" height="1.25" fill="#d4d4d4" opacity=".7"/><rect x="18" y="16.25" width="3" height="1.25" fill="#9cdcfe"/><rect x="21" y="16.25" width="1" height="1.25" fill="#d4d4d4" opacity=".7"/><rect x="22" y="16.25" width="10" height="1.25" fill="#dcdcaa"/><rect x="32" y="16.25" width="2" height="1.25" fill="#179fff"/><rect x="34" y="16.25" width="1" height="1.25" fill="#d4d4d4" opacity=".7"/><rect x="4" y="18.25" width="3" height="1.25" fill="#569cd6"/><rect x="8" y="18.25" width="4" height="1.25" fill="#9cdcfe"/><rect x="13" y="18.25" width="1" height="1.25" fill="#d4d4d4" opacity=".7"/><rect x="15" y="18.25" width="1" height="1.25" fill="#ce9178"/><rect x="16" y="18.25" width="2" height="1.25" fill="#179fff"/><rect x="18" y="18.25" width="4" height="1.25" fill="#9cdcfe"/><rect x="22" y="18.25" width="1" height="1.25" fill="#179fff"/><rect x="23" y="18.25" width="1" height="1.25" fill="#ce9178"/><rect x="24" y="18.25" width="2" height="1.25" fill="#179fff"/><rect x="26" y="18.25" width="7" height="1.25" fill="#9cdcfe"/><rect x="33" y="18.25" width="1" height="1.25" fill="#179fff"/><rect x="34" y="18.25" width="1" height="1.25" fill="#ce9178"/><rect x="35" y="18.25" width="2" height="1.25" fill="#179fff"/><rect x="37" y="18.25" width="7" height="1.25" fill="#9cdcfe"/><rect x="44" y="18.25" width="1" height="1.25" fill="#179fff"/><rect x="46" y="18.25" width="2" height="1.25" fill="#179fff"/><rect x="8" y="20.25" width="7" height="1.25" fill="#9cdcfe"/><rect x="15" y="20.25" width="1" height="1.25" fill="#d4d4d4" opacity=".7"/><rect x="16" y="20.25" width="6" height="1.25" fill="#9cdcfe"/><rect x="4" y="22.25" width="1" height="1.25" fill="#179fff"/><rect x="6" y="22.25" width="2" height="1.25" fill="#179fff"/><rect x="8" y="22.25" width="7" height="1.25" fill="#9cdcfe"/><rect x="15" y="22.25" width="1" height="1.25" fill="#d4d4d4" opacity=".7"/><rect x="16" y="22.25" width="3" height="1.25" fill="#9cdcfe"/><rect x="19" y="22.25" width="1" height="1.25" fill="#179fff"/><rect x="21" y="22.25" width="2" height="1.25" fill="#179fff"/><rect x="23" y="22.25" width="7" height="1.25" fill="#9cdcfe"/><rect x="30" y="22.25" width="1" height="1.25" fill="#d4d4d4" opacity=".7"/><rect x="31" y="22.25" width="3" height="1.25" fill="#dcdcaa"/><rect x="34" y="22.25" width="1" height="1.25" fill="#ffd700"/><rect x="35" y="22.25" width="12" height="1.25" fill="#ce9178"/><rect x="47" y="22.25" width="1" height="1.25" fill="#ffd700"/><rect x="48" y="22.25" width="1" height="1.25" fill="#179fff"/><rect x="49" y="22.25" width="1" height="1.25" fill="#ce9178"/><rect x="50" y="22.25" width="1" height="1.25" fill="#d4d4d4" opacity=".7"/><rect x="4" y="24.25" width="7" height="1.25" fill="#9cdcfe"/><rect x="11" y="24.25" width="1" height="1.25" fill="#d4d4d4" opacity=".7"/><rect x="12" y="24.25" width="3" height="1.25" fill="#dcdcaa"/><rect x="15" y="24.25" width="1" height="1.25" fill="#179fff"/><rect x="16" y="24.25" width="4" height="1.25" fill="#9cdcfe"/><rect x="20" y="24.25" width="1" height="1.25" fill="#179fff"/><rect x="21" y="24.25" width="1" height="1.25" fill="#d4d4d4" opacity=".7"/><rect x="4" y="26.25" width="2" height="1.25" fill="#4ec9b0"/><rect x="6" y="26.25" width="1" height="1.25" fill="#d4d4d4" opacity=".7"/><rect x="7" y="26.25" width="10" height="1.25" fill="#dcdcaa"/><rect x="17" y="26.25" width="1" height="1.25" fill="#179fff"/><rect x="8" y="28.25" width="12" height="1.25" fill="#ce9178"/><rect x="20" y="28.25" width="1" height="1.25" fill="#d4d4d4" opacity=".7"/><rect x="8" y="30.25" width="4" height="1.25" fill="#9cdcfe"/><rect x="13" y="30.25" width="1" height="1.25" fill="#d4d4d4" opacity=".7"/><rect x="15" y="30.25" width="1" height="1.25" fill="#ce9178"/><rect x="16" y="30.25" width="2" height="1.25" fill="#d7ba7d"/><rect x="18" y="30.25" width="1" height="1.25" fill="#ce9178"/><rect x="19" y="30.25" width="1" height="1.25" fill="#d4d4d4" opacity=".7"/><rect x="8" y="32.25" width="8" height="1.25" fill="#569cd6"/><rect x="17" y="32.25" width="2" height="1.25" fill="#ffd700"/><rect x="20" y="32.25" width="2" height="1.25" fill="#ffd700"/><rect x="4" y="34.25" width="1" height="1.25" fill="#179fff"/><rect x="5" y="34.25" width="1" height="1.25" fill="#d4d4d4" opacity=".7"/><rect x="4" y="36.25" width="4" height="1.25" fill="#dcdcaa"/><rect x="8" y="36.25" width="2" height="1.25" fill="#179fff"/><rect x="10" y="36.25" width="1" height="1.25" fill="#d4d4d4" opacity=".7"/><rect x="0" y="38.25" width="1" height="1.25" fill="#da70d6"/><rect x="1" y="38.25" width="1" height="1.25" fill="#ffd700"/><rect x="2" y="38.25" width="1" height="1.25" fill="#d4d4d4" opacity=".7"/><rect x="0" y="42.25" width="3" height="1.25" fill="#4fc1ff"/><rect x="3" y="42.25" width="1" height="1.25" fill="#d4d4d4" opacity=".7"/><rect x="4" y="42.25" width="3" height="1.25" fill="#dcdcaa"/><rect x="7" y="42.25" width="1" height="1.25" fill="#ffd700"/><rect x="8" y="42.25" width="3" height="1.25" fill="#ce9178"/><rect x="11" y="42.25" width="1" height="1.25" fill="#d4d4d4" opacity=".7"/><rect x="13" y="42.25" width="8" height="1.25" fill="#569cd6"/><rect x="22" y="42.25" width="1" height="1.25" fill="#da70d6"/><rect x="23" y="42.25" width="7" height="1.25" fill="#9cdcfe"/><rect x="30" y="42.25" width="1" height="1.25" fill="#d4d4d4" opacity=".7"/><rect x="32" y="42.25" width="8" height="1.25" fill="#9cdcfe"/><rect x="40" y="42.25" width="1" height="1.25" fill="#da70d6"/><rect x="42" y="42.25" width="1" height="1.25" fill="#da70d6"/><rect x="4" y="44.25" width="8" height="1.25" fill="#9cdcfe"/><rect x="12" y="44.25" width="1" height="1.25" fill="#d4d4d4" opacity=".7"/><rect x="13" y="44.25" width="4" height="1.25" fill="#dcdcaa"/><rect x="17" y="44.25" width="1" height="1.25" fill="#179fff"/><rect x="18" y="44.25" width="7" height="1.25" fill="#ce9178"/><rect x="25" y="44.25" width="1" height="1.25" fill="#179fff"/><rect x="26" y="44.25" width="1" height="1.25" fill="#d4d4d4" opacity=".7"/><rect x="0" y="46.25" width="1" height="1.25" fill="#da70d6"/><rect x="1" y="46.25" width="1" height="1.25" fill="#ffd700"/><rect x="2" y="46.25" width="1" height="1.25" fill="#d4d4d4" opacity=".7"/><rect x="0" y="48.25" width="3" height="1.25" fill="#4fc1ff"/><rect x="3" y="48.25" width="1" height="1.25" fill="#d4d4d4" opacity=".7"/><rect x="4" y="48.25" width="6" height="1.25" fill="#dcdcaa"/><rect x="10" y="48.25" width="1" height="1.25" fill="#ffd700"/><rect x="11" y="48.25" width="4" height="1.25" fill="#b5cea8"/><rect x="15" y="48.25" width="1" height="1.25" fill="#ffd700"/><rect x="16" y="48.25" width="1" height="1.25" fill="#d4d4d4" opacity=".7"/></svg><div style="left:907px;top:105px;width:1px;height:512px;background:#0e0e12"></div><div style="left:907px;top:105px;width:14px;height:1px;background:#0e0e12"></div><div style="left:908px;top:350px;width:13px;height:3px;background:#8c8c8c"></div><div style="left:0;top:617px;width:921px;height:22px;background:#181818;border-top:1px solid #2b2b2b"></div><div style="left:0;top:618px;width:26px;height:21px;background:#0078d4"></div><svg style="left:5px;top:621px" width="16" height="14" viewBox="0 0 16 14" fill="none" stroke="#fff" stroke-width="1.3"><path d="M0.300 5.200l4.200 3.800L0.300 12.800M8.800 1L4.600 4.900l4.200 3.900"/></svg><svg style="left:34.500px;top:621.400px" width="13" height="13" viewBox="0 0 13 13" fill="none" stroke="#cccccc" stroke-width="1"><circle cx="6.500" cy="6.500" r="5.700"/><path d="M3.700 3.700l5.600 5.600M9.300 3.700L3.700 9.300"/></svg><span id="s0" class="t" style="left:51px;top:620.8px;font:400 12px/17px 'Liberation Sans', sans-serif;color:#cccccc;transform:scaleX(0.9720);">0</span><svg style="left:61px;top:621px" width="14" height="13" viewBox="0 0 14 13" fill="none" stroke="#cccccc" stroke-width="1" stroke-linejoin="round"><path d="M7 1.200L13 12H1z"/><path d="M7 5v3.600M7 9.600v1.200"/></svg><span id="s1" class="t" style="left:78px;top:620.8px;font:400 12px/17px 'Liberation Sans', sans-serif;color:#cccccc;transform:scaleX(0.9720);">0</span><svg style="left:101px;top:621px" width="14" height="14" viewBox="0 0 14 14" fill="none" stroke="#cccccc" stroke-width="1"><path d="M7 5.600L3.600 13.400M7 5.600l3.400 7.800M4.800 10.600h4.400"/><circle cx="7" cy="4.600" r="1.100"/><path d="M4.300 7.300a3.900 3.900 0 0 1 0-5.600M9.700 7.300a3.900 3.900 0 0 0 0-5.600M2.400 9a6.300 6.300 0 0 1 0-8.800M11.600 9a6.300 6.300 0 0 0 0-8.800"/></svg><span id="s2" class="t" style="left:118px;top:620.8px;font:400 12px/17px 'Liberation Sans', sans-serif;color:#cccccc;transform:scaleX(0.9720);">0</span><span id="s3" class="t" style="left:575.5px;top:620.8px;font:400 12px/17px 'Liberation Sans', sans-serif;color:#cccccc;transform:scaleX(0.9425);">Ln 26, Col 1</span><span id="s4" class="t" style="left:653px;top:620.8px;font:400 12px/17px 'Liberation Sans', sans-serif;color:#cccccc;transform:scaleX(0.9180);">Spaces: 4</span><span id="s5" class="t" style="left:718px;top:620.8px;font:400 12px/17px 'Liberation Sans', sans-serif;color:#cccccc;transform:scaleX(0.9118);">UTF-8</span><span id="s6" class="t" style="left:765px;top:620.8px;font:400 12px/17px 'Liberation Sans', sans-serif;color:#cccccc;transform:scaleX(0.8614);">CRLF</span><span id="s7" class="t" style="left:807.5px;top:620.5px;font:400 12px/17px 'Liberation Sans', sans-serif;color:#cccccc;transform:scaleX(1.3099);">{}</span><span id="s8" class="t" style="left:826px;top:620.8px;font:400 12px/17px 'Liberation Sans', sans-serif;color:#cccccc;transform:scaleX(0.9370);">JavaScript</span><svg style="left:892px;top:621px" width="14" height="14" viewBox="0 0 14 14" fill="none" stroke="#cccccc" stroke-width="1.100"><path d="M2.400 10.400c1.200-1 1.400-2.200 1.400-4.400a3.400 3.400 0 0 1 4.600-3.200M10.600 7.200c.1 1.400.4 2.400 1.400 3.200H2.400M5.800 10.600a1.300 1.300 0 0 0 2.600 0"/><circle cx="10.800" cy="3.300" r="2" fill="#cccccc" stroke="none"/></svg></body></html>
